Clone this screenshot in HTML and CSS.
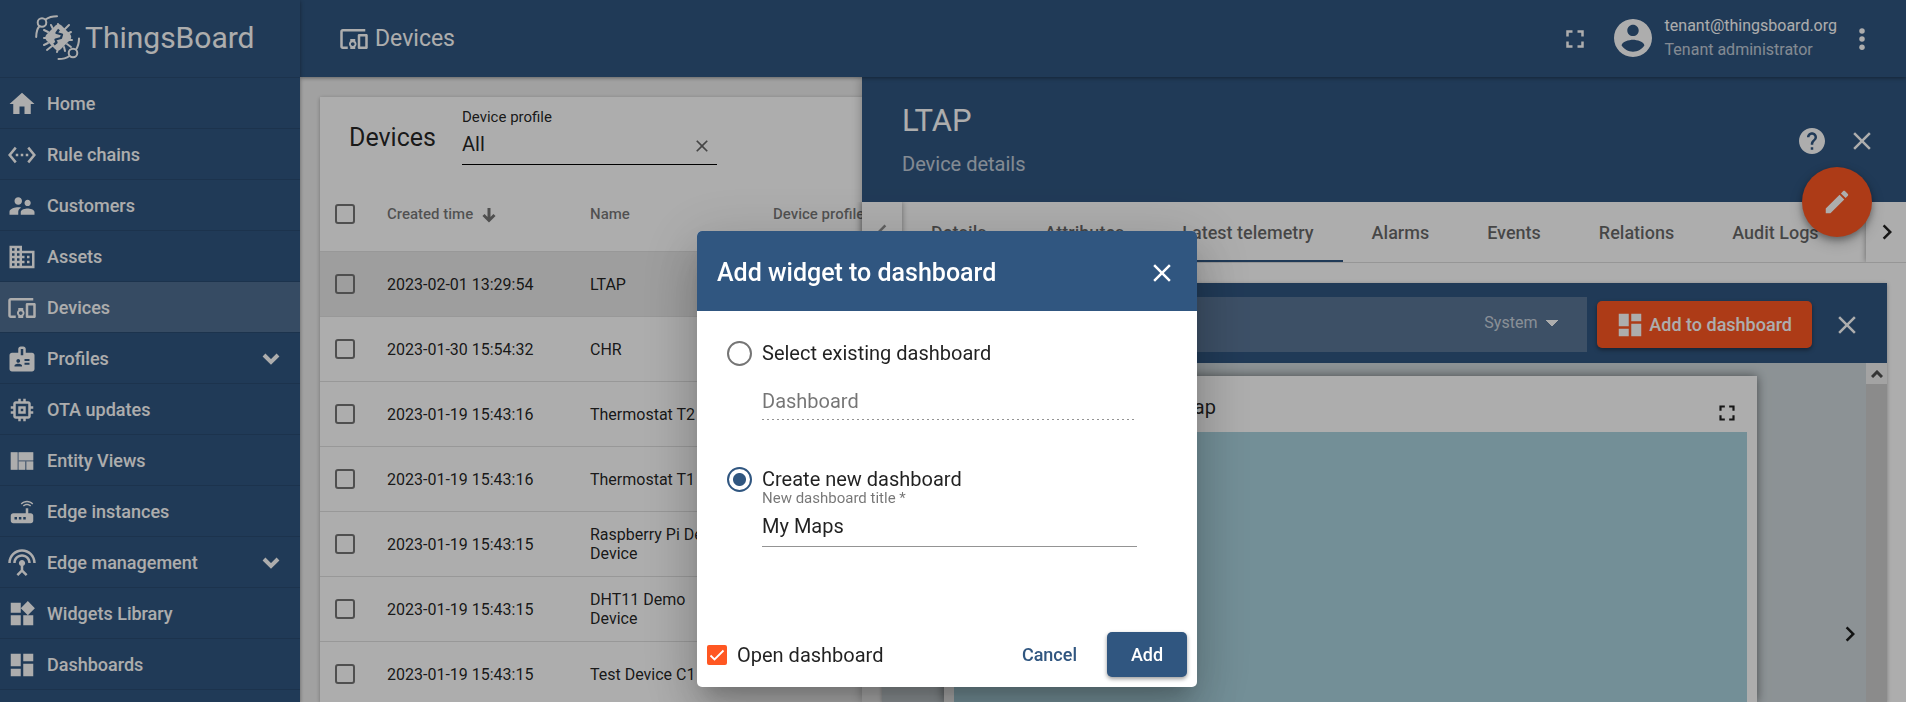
FILE: index.html
```html
<!DOCTYPE html>
<html lang="en">
<head>
<meta charset="utf-8">
<title>ThingsBoard | Devices</title>
<link rel="stylesheet" href="styles.css">
</head>
<body>
<svg class="sprite" aria-hidden="true">
  <symbol id="home" viewBox="0 0 24 24"><path d="M10 20v-6h4v6h5v-8h3L12 3 2 12h3v8z"/></symbol>
  <symbol id="rules" viewBox="0 0 24 24"><path d="M7.77 6.76L6.23 5.48.82 12l5.41 6.52 1.54-1.28L3.42 12l4.35-5.24zM7 13h2v-2H7v2zm10-2h-2v2h2v-2zm-6 2h2v-2h-2v2zm6.77-7.52l-1.54 1.28L20.58 12l-4.35 5.24 1.54 1.28L23.18 12l-5.41-6.52z"/></symbol>
  <symbol id="customers" viewBox="0 0 24 24"><path d="M16.5 12c1.38 0 2.49-1.12 2.49-2.5S17.88 7 16.5 7C15.12 7 14 8.12 14 9.5s1.12 2.5 2.5 2.5zM9 11c1.66 0 2.99-1.34 2.99-3S10.66 5 9 5C7.34 5 6 6.34 6 8s1.34 3 3 3zm7.5 3c-1.83 0-5.5.92-5.5 2.75V19h11v-2.25c0-1.83-3.67-2.75-5.5-2.75zM9 13c-2.33 0-7 1.17-7 3.5V19h7v-2.25c0-.85.33-2.34 2.37-3.47C10.5 13.1 9.66 13 9 13z"/></symbol>
  <symbol id="assets" viewBox="0 0 24 24"><path d="M12 7V3H2v18h20V7H12zM6 19H4v-2h2v2zm0-4H4v-2h2v2zm0-4H4V9h2v2zm0-4H4V5h2v2zm4 12H8v-2h2v2zm0-4H8v-2h2v2zm0-4H8V9h2v2zm0-4H8V5h2v2zm10 12h-8v-2h2v-2h-2v-2h2v-2h-2V9h8v10zm-2-8h-2v2h2v-2zm0 4h-2v2h2v-2z"/></symbol>
  <symbol id="devices" viewBox="0 0 24 24"><path d="M3 6h18V4H3c-1.1 0-2 .9-2 2v12c0 1.1.9 2 2 2h4v-2H3V6zm10 6H9v1.78c-.61.55-1 1.33-1 2.22s.39 1.67 1 2.22V20h4v-1.78c.61-.55 1-1.34 1-2.22s-.39-1.67-1-2.22V12zm-2 5.5c-.83 0-1.5-.67-1.5-1.5s.67-1.5 1.5-1.5 1.5.67 1.5 1.5-.67 1.5-1.5 1.5zM22 8h-6c-.5 0-1 .5-1 1v10c0 .5.5 1 1 1h6c.5 0 1-.5 1-1V9c0-.5-.5-1-1-1zm-1 10h-4v-8h4v8z"/></symbol>
  <symbol id="profiles" viewBox="0 0 24 24"><path d="M20 7h-5V4c0-1.1-.9-2-2-2h-2c-1.1 0-2 .9-2 2v3H4c-1.1 0-2 .9-2 2v11c0 1.1.9 2 2 2h16c1.1 0 2-.9 2-2V9c0-1.1-.9-2-2-2zM9 12c.83 0 1.5.67 1.5 1.5S9.83 15 9 15s-1.5-.67-1.5-1.5S8.17 12 9 12zm3 6H6v-.75c0-1 2-1.5 3-1.5s3 .5 3 1.5V18zm1-9h-2V4h2v5zm5 7.5h-4V15h4v1.5zm0-3h-4V12h4v1.5z"/></symbol>
  <symbol id="ota" viewBox="0 0 24 24"><path d="M15 9H9v6h6V9zm-2 4h-2v-2h2v2zm8-2V9h-2V7c0-1.1-.9-2-2-2h-2V3h-2v2h-2V3H9v2H7c-1.1 0-2 .9-2 2v2H3v2h2v2H3v2h2v2c0 1.1.9 2 2 2h2v2h2v-2h2v2h2v-2h2c1.1 0 2-.9 2-2v-2h2v-2h-2v-2h2zm-4 6H7V7h10v10z"/></symbol>
  <symbol id="views" viewBox="0 0 24 24"><path opacity=".4" d="M3 5h18v14H3z"/><path d="M3 5h5.4v14H3zM9.4 5H21v6.3H9.4zM9.4 12.3h5v6.7h-5zM15.6 12.3H21V19h-5.4z"/></symbol>
  <symbol id="router" viewBox="0 0 24 24"><path d="M20.2 5.9l.8-.8C19.6 3.7 17.8 3 16 3s-3.6.7-5 2.1l.8.8C13 4.8 14.5 4.2 16 4.2s3 .6 4.2 1.7zm-.9.8c-.9-.9-2.1-1.4-3.3-1.4s-2.4.5-3.3 1.4l.8.8c.7-.7 1.6-1 2.5-1 .9 0 1.8.3 2.5 1l.8-.8zM19 13h-2V9h-2v4H5c-1.1 0-2 .9-2 2v4c0 1.1.9 2 2 2h14c1.1 0 2-.9 2-2v-4c0-1.1-.9-2-2-2zM8 18H6v-2h2v2zm3.5 0h-2v-2h2v2zm3.5 0h-2v-2h2v2z"/></symbol>
  <symbol id="antenna" viewBox="0 0 24 24"><path d="M12 5c-3.87 0-7 3.13-7 7h2c0-2.76 2.24-5 5-5s5 2.24 5 5h2c0-3.87-3.13-7-7-7zm1 9.29c.88-.39 1.5-1.26 1.5-2.29 0-1.38-1.12-2.5-2.5-2.5S9.5 10.62 9.5 12c0 1.02.62 1.9 1.5 2.29v3.3L7.59 21 9 22.41l3-3 3 3L16.41 21 13 17.59v-3.3zM12 1C5.93 1 1 5.93 1 12h2c0-4.97 4.03-9 9-9s9 4.03 9 9h2c0-6.07-4.93-11-11-11z"/></symbol>
  <symbol id="widgets" viewBox="0 0 24 24"><path d="M13 13v8h8v-8h-8zM3 21h8v-8H3v8zM3 3v8h8V3H3zm13.66-1.31L11 7.34 16.66 13l5.66-5.66-5.66-5.65z"/></symbol>
  <symbol id="dashboard" viewBox="0 0 24 24"><path d="M3 13h8V3H3v10zm0 8h8v-6H3v6zm10 0h8V11h-8v10zm0-18v6h8V3h-8z"/></symbol>
  <symbol id="close" viewBox="0 0 24 24"><path d="M19 6.41L17.59 5 12 10.59 6.41 5 5 6.41 10.59 12 5 17.59 6.41 19 12 13.41 17.59 19 19 17.59 13.41 12z"/></symbol>
  <symbol id="fullscreen" viewBox="0 0 24 24"><path d="M7 14H5v5h5v-2H7v-3zm-2-4h2V7h3V5H5v5zm12 7h-3v2h5v-5h-2v3zM14 5v2h3v3h2V5h-5z"/></symbol>
  <symbol id="chevron-right" viewBox="0 0 24 24"><path d="M10 6L8.59 7.41 13.17 12l-4.58 4.59L10 18l6-6z"/></symbol>
</svg>

<div class="app">
  <aside class="sidebar">
    <div class="brand">
      <svg class="brand-mark" viewBox="0 0 46 46" aria-hidden="true">
        <g fill="none" stroke="#fff" stroke-width="2" stroke-linecap="round">
          <circle cx="7" cy="7.5" r="4.300"/><circle cx="38" cy="38" r="4.300"/>
          <path d="M10.5 4.5Q15 1.300 22 1.300M4.500 11Q1.200 15 1.200 22M34.500 41Q30 44 23.500 44M41 34.500Q44 30 44 23.500"/>
          <path d="M18 14l-2-4M24 12l-1-3M30 14l4-4M13 17l-4-2M12 23H9M32 19l4-2M34 25h3M13 28l-4 2M17 31l-5 4M23 34l-1 3M29 32l1 4M32 29l4 3"/>
        </g>
        <path fill="#fff" d="M20.500 10.500q3-3 6 0l8.500 8.500q2.500 3 0 6l-9 9q-3 3-6 0l-8.500-8.500q-2.500-3 0-6z"/>
        <path fill="none" stroke="#305680" stroke-width="2.300" stroke-linejoin="round" d="M24 14.500l-2.500 3.500 5.500 1.500-1 3.500-5.500 1.500 1 3-2.500 2"/>
      </svg>
      <span>ThingsBoard</span>
    </div>
    <nav class="menu">
      <a class="item" href="#"><svg class="ico"><use href="#home"/></svg>Home</a>
      <a class="item" href="#"><svg class="ico"><use href="#rules"/></svg>Rule chains</a>
      <a class="item" href="#"><svg class="ico"><use href="#customers"/></svg>Customers</a>
      <a class="item" href="#"><svg class="ico"><use href="#assets"/></svg>Assets</a>
      <a class="item active" href="#"><svg class="ico"><use href="#devices"/></svg>Devices</a>
      <a class="item" href="#"><svg class="ico"><use href="#profiles"/></svg>Profiles<svg class="expand" viewBox="0 0 18 12"><path d="M2 2l7 7 7-7"/></svg></a>
      <a class="item" href="#"><svg class="ico"><use href="#ota"/></svg>OTA updates</a>
      <a class="item" href="#"><svg class="ico"><use href="#views"/></svg>Entity Views</a>
      <a class="item" href="#"><svg class="ico"><use href="#router"/></svg>Edge instances</a>
      <a class="item" href="#"><svg class="ico"><use href="#antenna"/></svg>Edge management<svg class="expand" viewBox="0 0 18 12"><path d="M2 2l7 7 7-7"/></svg></a>
      <a class="item" href="#"><svg class="ico"><use href="#widgets"/></svg>Widgets Library</a>
      <a class="item" href="#"><svg class="ico"><use href="#dashboard"/></svg>Dashboards</a>
    </nav>
  </aside>

  <div class="main">
    <header class="topbar">
      <h1 class="crumb"><svg class="ico"><use href="#devices"/></svg>Devices</h1>
      <button class="icon-btn" aria-label="Fullscreen"><svg class="ico"><use href="#fullscreen"/></svg></button>
      <div class="user">
        <svg class="avatar" viewBox="2 2 20 20"><path d="M12 2C6.480 2 2 6.480 2 12s4.480 10 10 10 10-4.480 10-10S17.520 2 12 2zm0 3c1.660 0 3 1.340 3 3s-1.340 3-3 3-3-1.340-3-3 1.340-3 3-3zm0 14.200c-2.500 0-4.710-1.280-6-3.220.030-1.990 4-3.080 6-3.080 1.990 0 5.970 1.090 6 3.080-1.290 1.940-3.500 3.220-6 3.220z"/></svg>
        <div class="user-text"><span>tenant@thingsboard.org</span><span class="role">Tenant administrator</span></div>
      </div>
      <button class="icon-btn" aria-label="More"><svg class="ico" viewBox="0 0 24 24"><circle cx="12" cy="5.500" r="2.200"/><circle cx="12" cy="12" r="2.200"/><circle cx="12" cy="18.500" r="2.200"/></svg></button>
    </header>

    <div class="content">
      <section class="card">
        <div class="card-head">
          <h2>Devices</h2>
          <div class="filter">
            <label for="profile">Device profile</label>
            <div class="filter-row">
              <input id="profile" type="text" value="All">
              <button class="clear" aria-label="Clear"><svg><use href="#close"/></svg></button>
            </div>
          </div>
        </div>
        <table class="grid">
          <thead><tr><th class="c-check"><input type="checkbox" aria-label="Select all"></th><th class="c-time">Created time<svg class="sort" viewBox="0 0 14 16"><path d="M7 1v12M1.500 8L7 13.500 12.500 8"/></svg></th><th class="c-name">Name</th><th>Device profile</th></tr></thead>
          <tbody>
            <tr class="current"><td><input type="checkbox" aria-label="Select LTAP"></td><td>2023-02-01 13:29:54</td><td>LTAP</td><td></td></tr>
            <tr><td><input type="checkbox" aria-label="Select CHR"></td><td>2023-01-30 15:54:32</td><td>CHR</td><td></td></tr>
            <tr><td><input type="checkbox" aria-label="Select Thermostat T2"></td><td>2023-01-19 15:43:16</td><td>Thermostat T2</td><td></td></tr>
            <tr><td><input type="checkbox" aria-label="Select Thermostat T1"></td><td>2023-01-19 15:43:16</td><td>Thermostat T1</td><td></td></tr>
            <tr><td><input type="checkbox" aria-label="Select Raspberry Pi"></td><td>2023-01-19 15:43:15</td><td>Raspberry Pi Demo Device</td><td></td></tr>
            <tr><td><input type="checkbox" aria-label="Select DHT11"></td><td>2023-01-19 15:43:15</td><td>DHT11 Demo Device</td><td></td></tr>
            <tr><td><input type="checkbox" aria-label="Select Test Device C1"></td><td>2023-01-19 15:43:15</td><td>Test Device C1</td><td></td></tr>
          </tbody>
        </table>
      </section>

      <section class="drawer">
        <header class="drawer-head">
          <div class="drawer-title"><h2>LTAP</h2><p>Device details</p></div>
          <button class="icon-btn" aria-label="Help"><svg class="ico" viewBox="0 0 24 24"><path d="M12 1.600C6.260 1.600 1.600 6.260 1.600 12s4.660 10.400 10.400 10.400S22.400 17.740 22.400 12 17.740 1.600 12 1.600zM13 19h-2v-2h2v2zm2.070-7.750l-.9.920C13.450 12.900 13 13.500 13 15h-2v-.5c0-1.100.450-2.100 1.170-2.830l1.240-1.260c.370-.360.590-.860.590-1.410 0-1.100-.9-2-2-2s-2 .9-2 2H8c0-2.210 1.790-4 4-4s4 1.790 4 4c0 .880-.360 1.680-.930 2.250z"/></svg></button>
          <button class="icon-btn" aria-label="Close details"><svg class="ico"><use href="#close"/></svg></button>
          <button class="fab" aria-label="Edit"><svg class="ico" viewBox="0 0 24 24"><path d="M3 17.250V21h3.750L17.810 9.940l-3.750-3.750L3 17.250zM20.710 7.040c.390-.390.390-1.020 0-1.410l-2.340-2.340c-.390-.390-1.020-.390-1.410 0l-1.830 1.830 3.750 3.750 1.830-1.830z"/></svg></button>
        </header>
        <div class="tabs">
          <button class="pager prev" aria-label="Previous tabs"><svg class="ico"><use href="#chevron-right"/></svg></button>
          <div class="tab-list" role="tablist">
            <button class="tab" role="tab">Details</button>
            <button class="tab" role="tab">Attributes</button>
            <button class="tab selected" role="tab" aria-selected="true">Latest telemetry</button>
            <button class="tab" role="tab">Alarms</button>
            <button class="tab" role="tab">Events</button>
            <button class="tab" role="tab">Relations</button>
            <button class="tab" role="tab">Audit Logs</button>
          </div>
          <button class="pager next" aria-label="Next tabs"><svg class="ico"><use href="#chevron-right"/></svg></button>
        </div>
        <div class="panel">
          <div class="panel-bar">
            <div class="bundle"><select aria-label="Widgets bundle"><option>System</option></select></div>
            <button class="add-dash"><svg class="ico"><use href="#dashboard"/></svg>Add to dashboard</button>
            <button class="icon-btn" aria-label="Close widgets"><svg class="ico"><use href="#close"/></svg></button>
          </div>
          <div class="stage">
            <div class="stage-view">
              <article class="widget">
                <header><h3>Route Map - OpenStreetMap</h3><button class="icon-btn small" aria-label="Expand map"><svg><use href="#fullscreen"/></svg></button></header>
                <div class="map"></div>
              </article>
              <button class="icon-btn next-widget" aria-label="Next widget"><svg class="ico"><use href="#chevron-right"/></svg></button>
            </div>
            <div class="scrollbar"><div class="scroll-up"><svg viewBox="0 0 12 8"><path d="M1 7l5-5 5 5"/></svg></div></div>
          </div>
        </div>
      </section>
    </div>
  </div>
</div>

<div class="backdrop">
  <form class="dialog" role="dialog" aria-labelledby="dlg-title">
    <header class="dialog-head">
      <h2 id="dlg-title">Add widget to dashboard</h2>
      <button type="button" class="icon-btn" aria-label="Close dialog"><svg class="ico"><use href="#close"/></svg></button>
    </header>
    <div class="dialog-body">
      <div class="choice"><input type="radio" name="mode" id="existing"><label for="existing">Select existing dashboard</label></div>
      <div class="field disabled"><input type="text" placeholder="Dashboard" aria-label="Dashboard" disabled></div>
      <div class="choice"><input type="radio" name="mode" id="create" checked><label for="create">Create new dashboard</label></div>
      <div class="field titled"><label for="new-title">New dashboard title *</label><input type="text" id="new-title" value="My Maps"></div>
    </div>
    <footer class="dialog-foot">
      <input type="checkbox" id="open" checked><label for="open">Open dashboard</label>
      <button type="button" class="btn">Cancel</button>
      <button type="button" class="btn primary">Add</button>
    </footer>
  </form>
</div>
</body>
</html>
```

FILE: styles.css
```css
* { box-sizing: border-box; }
html, body { height: 100%; }
body {
  margin: 0;
  overflow: hidden;
  font: 400 16px/20px Roboto, "Liberation Sans", sans-serif;
  color: rgba(0, 0, 0, .87);
}
h1, h2, h3, p { margin: 0; font-weight: 400; }
button, input, select { font: inherit; color: inherit; margin: 0; }
button { border: 0; padding: 0; background: none; }
svg { fill: currentColor; display: block; flex: none; }
.sprite { position: absolute; width: 0; height: 0; }
.ico { width: 30px; height: 30px; }
.icon-btn { width: 50px; height: 50px; display: grid; place-items: center; flex: none; }

.app { display: flex; height: 100vh; }

/* Sidebar */
.sidebar {
  flex: none;
  width: 300px;
  background: #305680;
  color: #fff;
  overflow: hidden;
  z-index: 3;
  box-shadow: 0 1px 4px rgba(0, 0, 0, .4);
}
.brand { display: flex; align-items: center; gap: 4px; height: 77px; padding: 0 0 2px 35px; font-size: 30px; }
.brand-mark { width: 46px; height: 46px; }
.item {
  display: flex;
  align-items: center;
  height: 51px;
  padding: 1px 20px 0 7px;
  gap: 10px;
  border-top: 1px solid #2a4c72;
  color: #fff;
  text-decoration: none;
  font-size: 18px;
  font-weight: 500;
}
.item:last-child { border-bottom: 1px solid #2a4c72; height: 52px; }
.item.active { background: #506f92; }
.expand { width: 18px; height: 12px; margin-left: auto; fill: none; stroke: #fff; stroke-width: 4; }

/* Top bar */
.main { flex: 1; min-width: 0; display: flex; flex-direction: column; }
.topbar {
  display: flex;
  align-items: center;
  height: 77px;
  flex: none;
  padding: 0 19px 0 39px;
  background: #305680;
  color: #fff;
  z-index: 2;
  box-shadow: 0 1px 4px rgba(0, 0, 0, .4);
}
.crumb { display: flex; align-items: center; gap: 6px; margin-right: auto; font-size: 23px; line-height: 30px; }
.user { display: flex; align-items: center; gap: 13px; padding: 0 0 2px 14px; }
.avatar { width: 38px; height: 38px; }
.user-text { display: flex; flex-direction: column; font-size: 16px; line-height: 24px; }
.role { opacity: .7; }

/* Device list */
.content { flex: 1; min-height: 0; position: relative; display: flex; padding: 20px 20px 0; background: #eee; }
.card { flex: 1; min-width: 0; background: #fff; box-shadow: 0 1px 4px rgba(0, 0, 0, .3); }
.card-head { display: flex; height: 84px; padding-left: 29px; }
.card-head h2 { width: 113px; padding-top: 26px; font-size: 25px; line-height: 30px; }
.filter { width: 255px; padding-top: 10px; }
.filter label { display: block; font-size: 15px; line-height: 20px; }
.filter-row { display: flex; align-items: center; height: 38px; border-bottom: 1px solid #000; }
.filter input { flex: 1; min-width: 0; border: 0; padding: 0 0 3px; background: none; font-size: 20px; }
.clear { width: 30px; height: 30px; display: grid; place-items: center; color: rgba(0, 0, 0, .6); }
.clear svg { width: 20px; height: 20px; }
.grid { width: 100%; border-collapse: collapse; table-layout: fixed; }
.grid th { height: 70px; padding: 0 0 4px; text-align: left; font-size: 15px; font-weight: 500; color: rgba(0, 0, 0, .54); }
.grid td { height: 65px; padding: 1px 0 0; border-top: 1px solid #e0e0e0; font-size: 16px; line-height: 19px; }
.grid td:nth-child(3) { padding-right: 40px; }
.grid th:first-child, .grid td:first-child { padding-left: 15px; }
.c-check { width: 67px; }
.c-time { width: 203px; }
.c-name { width: 183px; }
.current { background: #e9e9e9; }
.sort { display: inline-block; width: 14px; height: 16px; margin-left: 9px; vertical-align: middle; fill: none; stroke: currentColor; stroke-width: 3; }
input[type="checkbox"] {
  appearance: none;
  display: block;
  flex: none;
  width: 20px;
  height: 20px;
  border: 2px solid #757575;
  border-radius: 3px;
}

/* Details drawer */
.drawer {
  position: absolute;
  top: 0;
  right: 0;
  bottom: 0;
  left: 562px;
  display: flex;
  flex-direction: column;
  background: #fff;
  box-shadow: 0 0 10px rgba(0, 0, 0, .3);
}
.drawer-head { position: relative; display: flex; align-items: center; height: 125px; flex: none; padding: 2px 19px 0 40px; background: #305680; color: #fff; }
.drawer-title { flex: 1; padding-bottom: 2px; }
.drawer-title h2 { font-size: 31px; line-height: 40px; }
.drawer-title p { padding-top: 8px; font-size: 20px; line-height: 30px; opacity: .7; }
.fab {
  position: absolute;
  right: 34px;
  bottom: -35px;
  z-index: 1;
  width: 70px;
  height: 70px;
  display: grid;
  place-items: center;
  border-radius: 50%;
  background: #ff5722;
  color: #fff;
  box-shadow: 0 3px 6px rgba(0, 0, 0, .3), 0 6px 14px rgba(0, 0, 0, .2);
}
.tabs { display: flex; height: 61px; flex: none; border-bottom: 1px solid #ddd; }
.pager { width: 40px; flex: none; display: grid; place-items: center; box-shadow: 0 0 6px rgba(0, 0, 0, .4); clip-path: inset(0 -8px 0 -8px); }
.prev svg { transform: scaleX(-1); opacity: .5; }
.next { padding-left: 2px; }
.tab-list { flex: 1; min-width: 0; display: flex; overflow: hidden; }
.tab { padding: 3px 29px 0; flex: none; font-size: 18px; font-weight: 500; color: rgba(0, 0, 0, .6); border-bottom: 2px solid transparent; }
.tab.selected { border-bottom-color: #305680; }
.panel { flex: 1; min-height: 0; display: flex; flex-direction: column; margin: 20px 19px 0 20px; box-shadow: 0 1px 4px rgba(0, 0, 0, .3); }
.panel-bar { display: flex; align-items: center; height: 80px; flex: none; padding: 3px 15px 0; background: #305680; color: #fff; }
.bundle { flex: 1; display: flex; justify-content: flex-end; height: 55px; padding: 0 29px 4px 0; margin-right: 10px; background: #5a7697; }
.bundle select {
  appearance: none;
  border: 0;
  padding: 0 20px 0 0;
  font-size: 16px;
  color: rgba(255, 255, 255, .7);
  background:
    linear-gradient(to bottom right, #fff 50%, transparent 51%) right 0 center / 6px 6px no-repeat,
    linear-gradient(to bottom left, #fff 50%, transparent 51%) right 6px center / 6px 6px no-repeat;
}
.add-dash {
  display: flex;
  align-items: center;
  gap: 4px;
  height: 47px;
  padding: 0 20px 0 18px;
  margin-right: 10px;
  border-radius: 5px;
  background: #ff5722;
  font-size: 18px;
  font-weight: 500;
  box-shadow: 0 2px 4px rgba(0, 0, 0, .4);
}
.stage { flex: 1; min-height: 0; display: flex; background: #cfd8dc; }
.stage-view { flex: 1; display: flex; position: relative; padding: 13px 109px 0 62px; }
.widget { flex: 1; display: flex; flex-direction: column; padding: 0 10px; background: #fff; box-shadow: 0 0 10px rgba(0, 0, 0, .5); }
.widget header { display: flex; align-items: center; justify-content: space-between; height: 56px; padding: 6px 0 0 11px; }
.widget h3 { font-size: 20px; line-height: 30px; }
.small { width: 40px; height: 40px; padding-top: 12px; }
.small svg { width: 26px; height: 26px; }
.map { flex: 1; background: #aad3df; }
.next-widget { position: absolute; right: -9px; top: 246px; }
.scrollbar { width: 21px; background: #cdcdcd; }
.scroll-up { display: grid; place-items: center; height: 21px; background: #f1f1f1; }
.scroll-up svg { width: 12px; height: 8px; fill: none; stroke: #505050; stroke-width: 3; }

/* Dialog */
.backdrop {
  position: fixed;
  inset: 0;
  z-index: 10;
  display: flex;
  justify-content: center;
  align-items: flex-start;
  padding: 231px 12px 0 0;
  background: rgba(0, 0, 0, .32);
}
.dialog {
  width: 500px;
  border-radius: 5px;
  background: #fff;
  box-shadow: 0 14px 19px -9px rgba(0, 0, 0, .2), 0 30px 48px 4px rgba(0, 0, 0, .14), 0 11px 58px 10px rgba(0, 0, 0, .12);
}
.dialog-head { display: flex; align-items: center; justify-content: space-between; height: 80px; padding: 3px 10px 0 20px; border-radius: 5px 5px 0 0; background: #305680; color: #fff; }
.dialog-head h2 { font-size: 25px; line-height: 30px; font-weight: 500; }
.dialog-body { padding: 27px 60px 0 30px; font-size: 20px; }
.choice { display: flex; align-items: center; gap: 10px; height: 30px; }
.choice input { appearance: none; width: 25px; height: 25px; border: 2px solid #757575; border-radius: 50%; }
.choice input:checked { border-color: #305680; background: radial-gradient(circle, #305680 6px, transparent 7px); }
.field { margin-left: 35px; }
.field input { display: block; width: 100%; height: 30px; border: 0; padding: 0; outline: 0; background: none; font-size: 20px; }
.field label { display: block; padding-bottom: 3px; font-size: 15px; line-height: 20px; color: rgba(0, 0, 0, .54); }
.disabled { padding: 18px 0 4px; margin-bottom: 44px; background: repeating-linear-gradient(90deg, #949494 0 2px, transparent 2px 5px) bottom / 100% 1px no-repeat; }
.disabled input::placeholder { color: rgba(0, 0, 0, .54); opacity: 1; }
.titled { margin-top: -6px; padding-bottom: 5px; border-bottom: 1px solid #949494; }
.dialog-foot { display: flex; align-items: center; gap: 10px; padding: 85px 10px 10px; font-size: 20px; }
.dialog-foot input { border-color: #ff5722; border-radius: 2px; background: #ff5722 url("data:image/svg+xml,%3Csvg xmlns='http://www.w3.org/2000/svg' viewBox='0 0 16 16'%3E%3Cpath d='M1.500 8.500l4 4 9-9' fill='none' stroke='white' stroke-width='1.800'/%3E%3C/svg%3E") center / 16px no-repeat; }
.dialog-foot label { margin-right: auto; }
.btn { height: 45px; padding: 0 20px; border-radius: 5px; font-size: 18px; font-weight: 500; color: #305680; }
.btn.primary { width: 80px; background: #305680; color: #fff; box-shadow: 0 2px 4px rgba(0, 0, 0, .4); }
```
